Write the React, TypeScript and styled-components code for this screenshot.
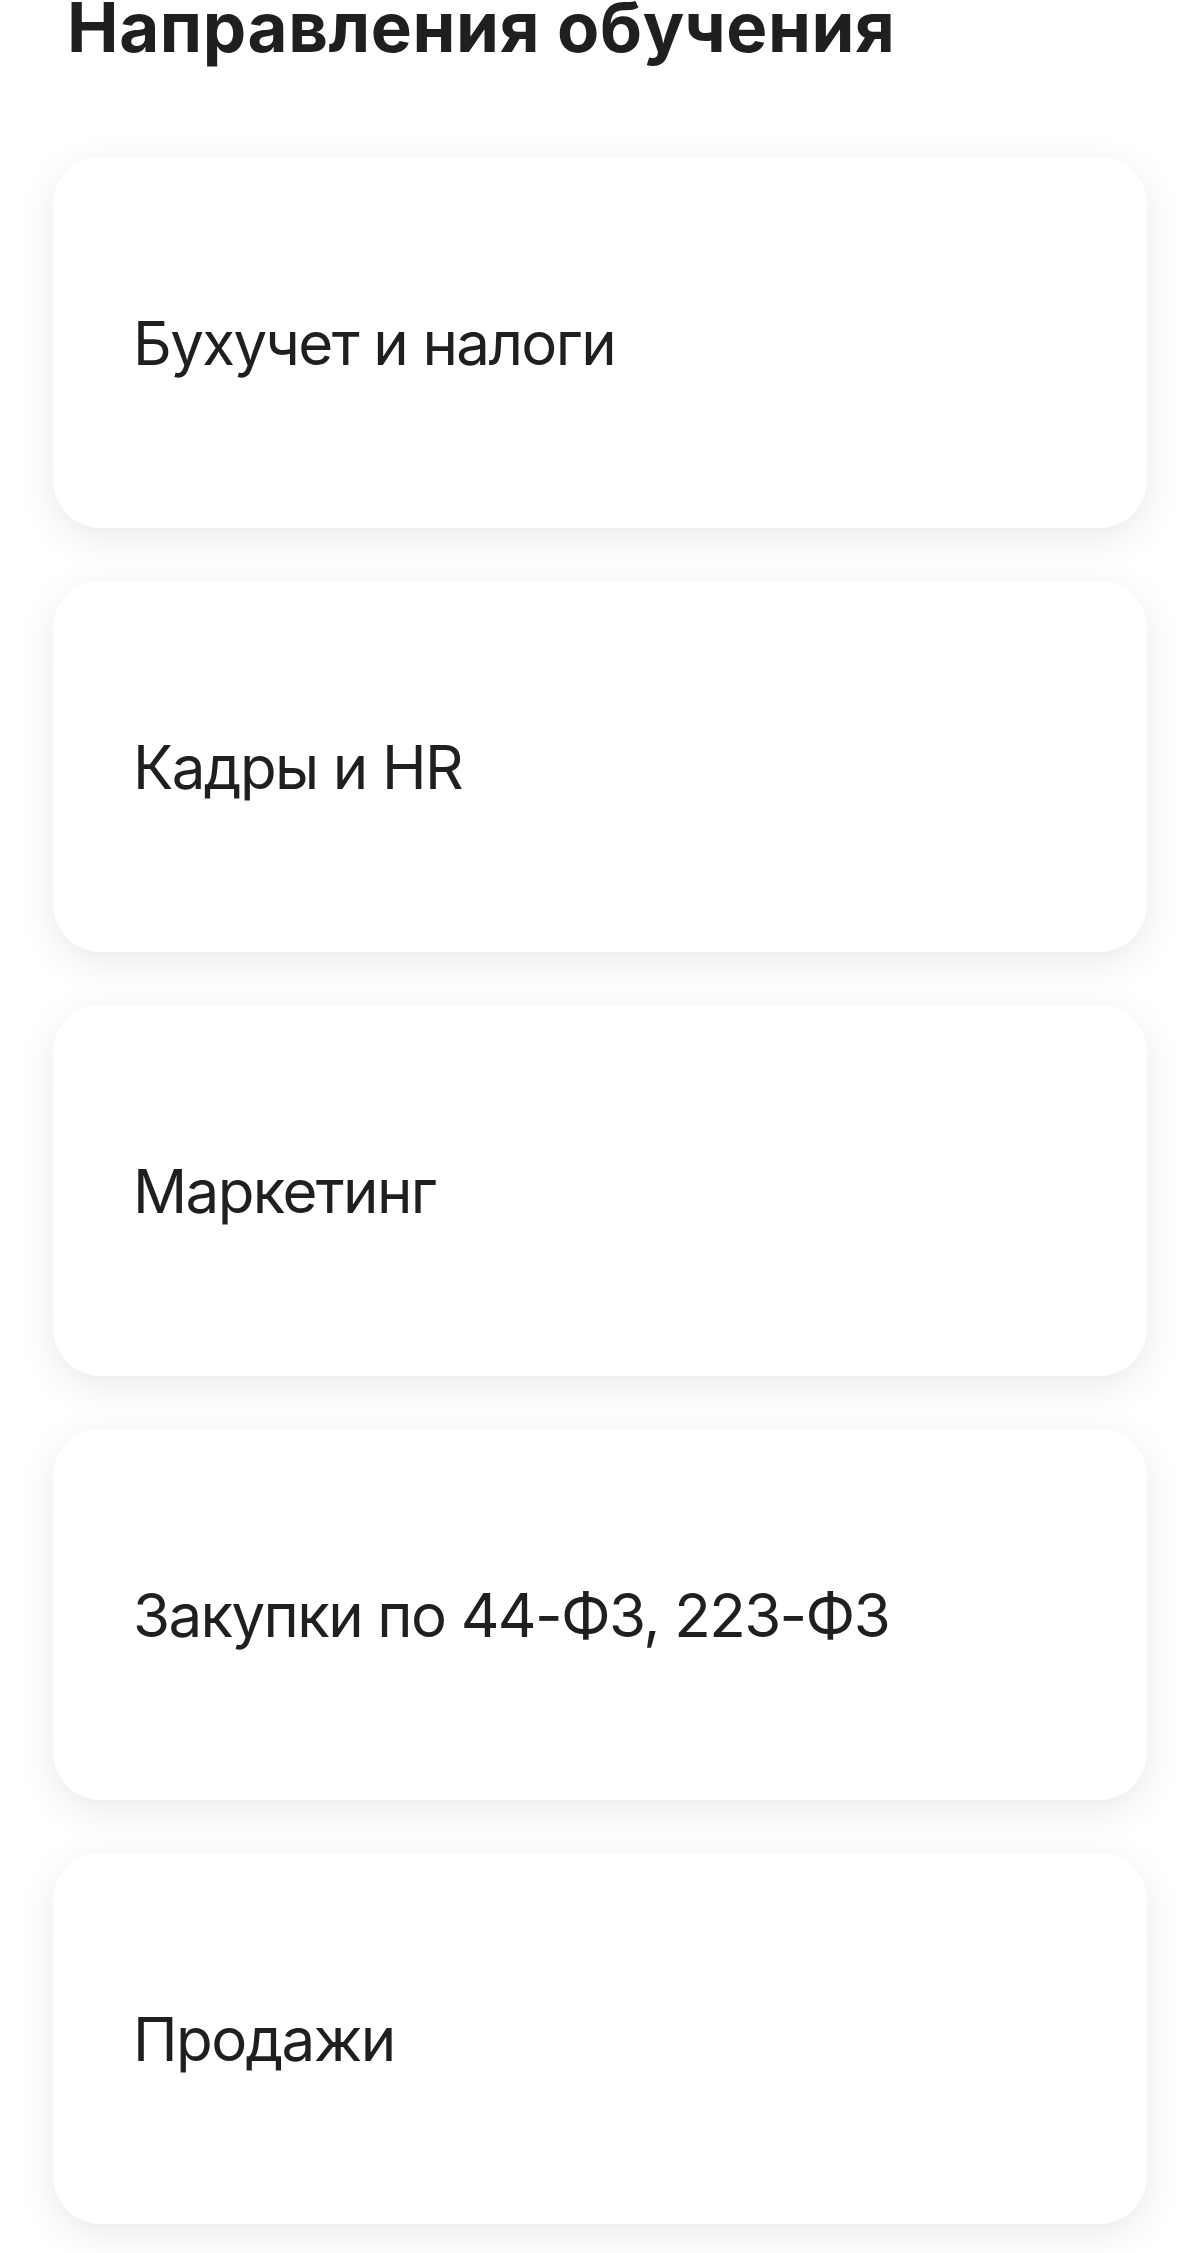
import React from "react"
import styled, { createGlobalStyle } from "styled-components";

const GlobalStyle = createGlobalStyle`
    html, body {
        margin: 0;
        padding: 0;
        background: #FFFFFF;
    }
    body {
        font-family: 'Inter', 'Noto Sans', sans-serif;
        color: #1F1F1F;
    }
`

export const Page = styled.div`
    width: 1200px;
    min-height: 2253px;
    box-sizing: border-box;
    background-color: #FFFFFF;
    padding: 0 53px 25px 53px;
    overflow: hidden;
`

export const Title = styled.h1`
    margin: 0;
    padding-left: 14px;
    font-family: 'Inter', 'Noto Sans', sans-serif;
    font-weight: 700;
    font-size: 69px;
    line-height: 55px;
    letter-spacing: 0.6px;
    color: #1F1F1F;
`

export const CardList = styled.div`
    display: flex;
    flex-direction: column;
    gap: 53px;
    margin-top: 102px;
`

export const Card = styled.div`
    height: 371px;
    box-sizing: border-box;
    display: flex;
    align-items: center;
    padding-left: 80px;
    background-color: #FFFFFF;
    border-radius: 48px;
    box-shadow: 0 10px 38px rgba(0, 0, 0, 0.085);
`

export const CardLabel = styled.span`
    font-family: 'Inter', 'Noto Sans', sans-serif;
    font-weight: 400;
    font-size: 60px;
    line-height: 1;
    letter-spacing: -1.6px;
    color: #1F1F1F;
`

const directions = [
    "Бухучет и налоги",
    "Кадры и HR",
    "Маркетинг",
    "Закупки по 44-ФЗ, 223-ФЗ",
    "Продажи",
]

const App: React.FC = () => {
    return (
        <>
            <GlobalStyle/>
            <Page>
                <Title>Направления обучения</Title>
                <CardList>
                    {directions.map((label) => (
                        <Card key={label}>
                            <CardLabel>{label}</CardLabel>
                        </Card>
                    ))}
                </CardList>
            </Page>
        </>
    )
}

export default App
